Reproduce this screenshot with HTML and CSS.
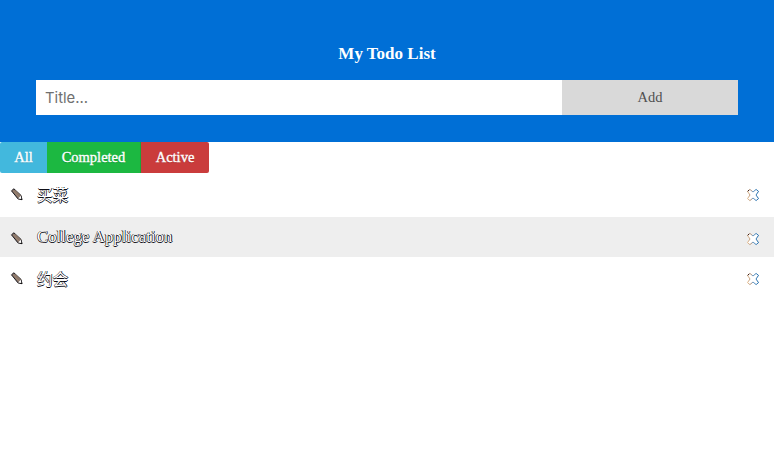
FILE: index.html
```html
<!DOCTYPE html>
<html lang="en">
<head>
<meta charset="utf-8">
<title>My Todo List</title>
<link rel="stylesheet" href="styles.css">
</head>
<body>
<svg class="defs" aria-hidden="true">
  <symbol id="pencil" viewBox="0 0 14 14">
    <path d="M1.5 2.8 3.9 .8 11 7.4 12 11.7 8 10.9Z" fill="#85746b" stroke="#19171c" stroke-width="1"/>
    <path d="M3.2 2.6 8.9 9.2M5 2.2 10.4 7.8" stroke="#a98b70" stroke-width=".8"/>
    <path d="M8.2 10.4 10.7 7.8 11.5 11Z" fill="#fff"/>
    <path d="M10.6 11.5 12.3 12 11.8 9.9Z" fill="#111"/>
  </symbol>
  <symbol id="cross" viewBox="0 0 14 14">
    <path d="M1.5 3.4 3.9 1.4 7 4 10.1 1.4 12.5 3.4 10 7 12.5 10.6 10.1 12.6 7 10 3.9 12.6 1.5 10.6 4 7Z" fill="#fff" stroke="url(#edge)" stroke-width="1"/>
    <path d="M1.7 3.3 3.2 2" stroke="#2a0d08" stroke-width="1"/>
  </symbol>
  <linearGradient id="edge"><stop offset="0" stop-color="#e5b988"/><stop offset=".35" stop-color="#a98c78"/><stop offset=".5" stop-color="#6a9cc8"/><stop offset="1" stop-color="#1766a8"/></linearGradient>
</svg>
<header class="header">
  <h1 class="heading">My Todo List</h1>
  <form class="entry">
    <input class="entry-input" type="text" placeholder="Title...">
    <button class="entry-add" type="button">Add</button>
  </form>
</header>
<nav class="filters">
  <button class="filter filter-all">All</button>
  <button class="filter filter-completed">Completed</button>
  <button class="filter filter-active">Active</button>
</nav>
<ul class="list">
  <li class="item"><svg class="icon"><use href="#pencil"/></svg><span class="label cjk">买菜</span><svg class="icon"><use href="#cross"/></svg></li>
  <li class="item item-shaded"><svg class="icon"><use href="#pencil"/></svg><span class="label">College Application</span><svg class="icon"><use href="#cross"/></svg></li>
  <li class="item"><svg class="icon"><use href="#pencil"/></svg><span class="label cjk">约会</span><svg class="icon"><use href="#cross"/></svg></li>
</ul>
</body>
</html>
```
FILE: styles.css
```css
* { box-sizing: border-box; }
body { margin: 0; background: #fff; font-family: "Liberation Serif", "Noto Sans CJK SC", serif; }
.defs { position: absolute; width: 0; height: 0; }
.header { height: 142px; padding: 44px 36px 0; background: #006fd6; color: #fff; }
.heading { margin: 0 0 16px; font-size: 17px; line-height: 20px; text-align: center; }
.entry { display: flex; height: 35px; }
.entry-input { width: 526px; border: 0; border-radius: 0; padding: 0 9px; font: 14.8px Inter, sans-serif; }
.entry-input::placeholder { color: #707070; opacity: 1; }
.entry-add { flex: 1; border: 0; padding: 0; background: #d9d9d9; color: #505050; font: 14.5px "Liberation Serif", serif; }
.filters { display: flex; height: 31px; }
.filter { border: 0; padding: 0; color: #fff; font: 14.5px "Liberation Serif", serif; -webkit-text-stroke: .35px #fff; text-shadow: 0 1px 1px rgba(0,0,0,.2); }
.filter-all { width: 47px; background: #42b8dd; border-radius: 2px 0 0 2px; }
.filter-completed { width: 94px; background: #1cb841; border-right: 1px solid #1aa53a; }
.filter-active { width: 68px; background: #ca3c3c; border-radius: 0 2px 2px 0; }
.list { margin: 0; padding: 0; list-style: none; }
.item { display: flex; align-items: center; height: 44px; padding: 0 14px 0 10px; }
.item-shaded { height: 40px; background: #eee; }
.icon { width: 14px; height: 14px; flex: none; }
.item-shaded .icon { position: relative; top: 2px; }
.label { flex: 1; margin-left: 13px; font-size: 16.5px; line-height: 20px; letter-spacing: .16px; color: #fff; text-shadow: -.6px 0 #2d1c12, .6px 0 #06162e, .6px 0 #06162e, 0 .5px #101018; }
.cjk { padding-top: 2px; font-size: 15.6px; letter-spacing: 0; }
```
